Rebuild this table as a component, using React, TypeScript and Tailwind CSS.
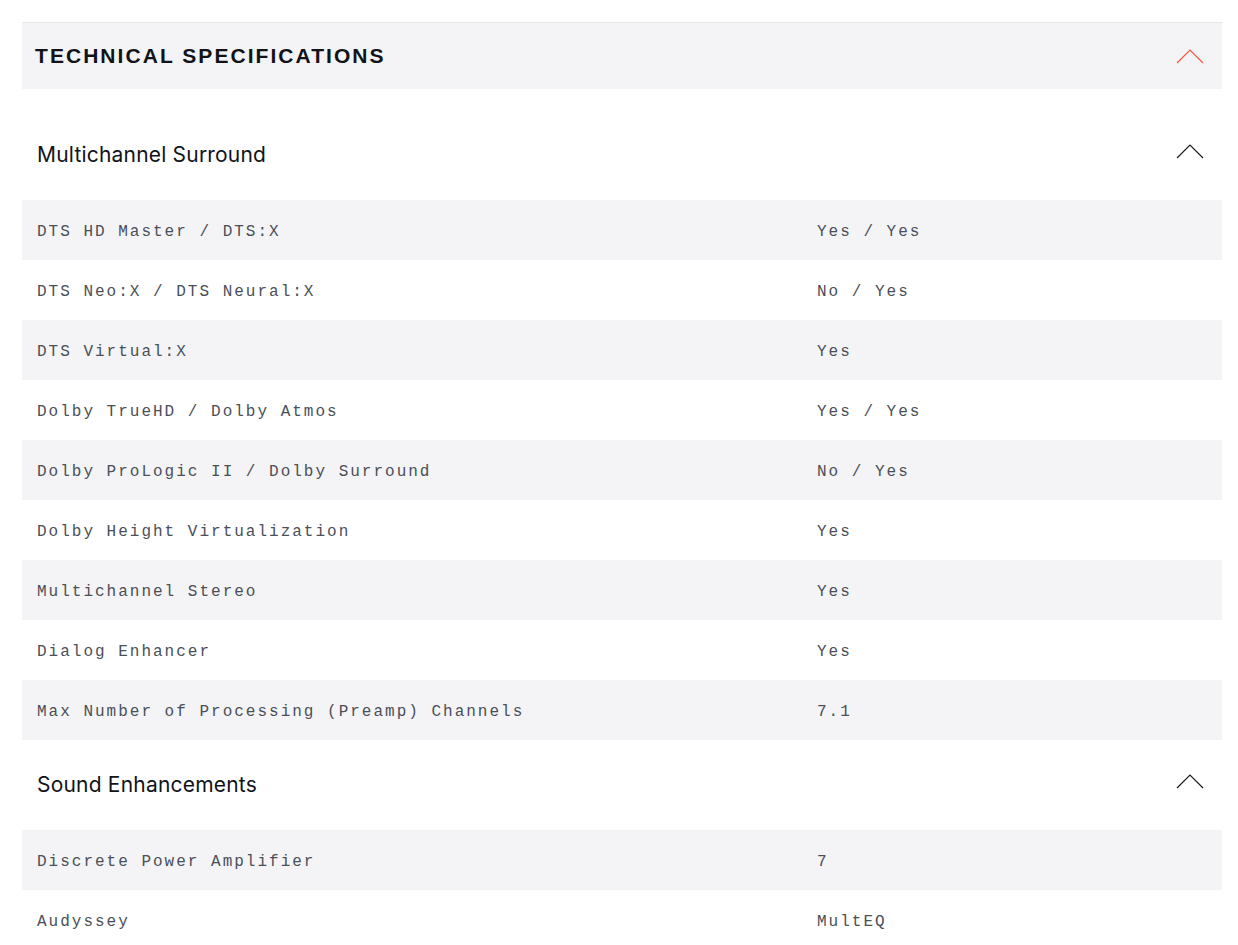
import React from "react";

const Chevron = ({ color }: { color: string }) => (
  <svg width="28" height="16" viewBox="0 0 28 16" fill="none">
    <path d="M1 15 L14 2 L27 15" stroke={color} strokeWidth="1.2" />
  </svg>
);

type Row = [string, string];

const sections: { title: string; rows: Row[] }[] = [
  {
    title: "Multichannel Surround",
    rows: [
      ["DTS HD Master / DTS:X", "Yes / Yes"],
      ["DTS Neo:X / DTS Neural:X", "No / Yes"],
      ["DTS Virtual:X", "Yes"],
      ["Dolby TrueHD / Dolby Atmos", "Yes / Yes"],
      ["Dolby ProLogic II / Dolby Surround", "No / Yes"],
      ["Dolby Height Virtualization", "Yes"],
      ["Multichannel Stereo", "Yes"],
      ["Dialog Enhancer", "Yes"],
      ["Max Number of Processing (Preamp) Channels", "7.1"],
    ],
  },
  {
    title: "Sound Enhancements",
    rows: [
      ["Discrete Power Amplifier", "7"],
      ["Audyssey", "MultEQ"],
    ],
  },
];

export default function App() {
  return (
    <div className="w-[1238px] h-[945px] overflow-hidden bg-white pt-[22px] px-[22px]">
      <div className="w-[1200px]">
        <div className="flex items-center justify-between h-[67px] bg-[#f4f4f6] border-t border-[#e6e6e8] pl-[13px] pr-[18px]">
          <h2 className="font-['Liberation_Sans',sans-serif] font-bold text-[21px] tracking-[2.05px] text-[#111318]">
            TECHNICAL SPECIFICATIONS
          </h2>
          <Chevron color="#f2553a" />
        </div>

        {sections.map((s, si) => (
          <div key={s.title} className={si === 0 ? "mt-[21px]" : ""}>
            <div className="flex items-center justify-between h-[90px] pl-[15px] pr-[18px]">
              <h3 className="font-['Inter',sans-serif] text-[21px] tracking-[0.2px] text-[#111318]">
                {s.title}
              </h3>
              <div className="-mt-[8px]">
                <Chevron color="#1a1a1a" />
              </div>
            </div>
            {s.rows.map(([k, v], i) => (
              <div
                key={k}
                className={`grid grid-cols-[780px_1fr] items-center h-[60px] pt-[4px] font-['Liberation_Mono',monospace] text-[16px] tracking-[2px] text-[#4a4f58] ${
                  i % 2 === 0 ? "bg-[#f4f4f6]" : "bg-white"
                }`}
              >
                <span className="pl-[15px]">{k}</span>
                <span className="pl-[15px]">{v}</span>
              </div>
            ))}
          </div>
        ))}
      </div>
    </div>
  );
}
